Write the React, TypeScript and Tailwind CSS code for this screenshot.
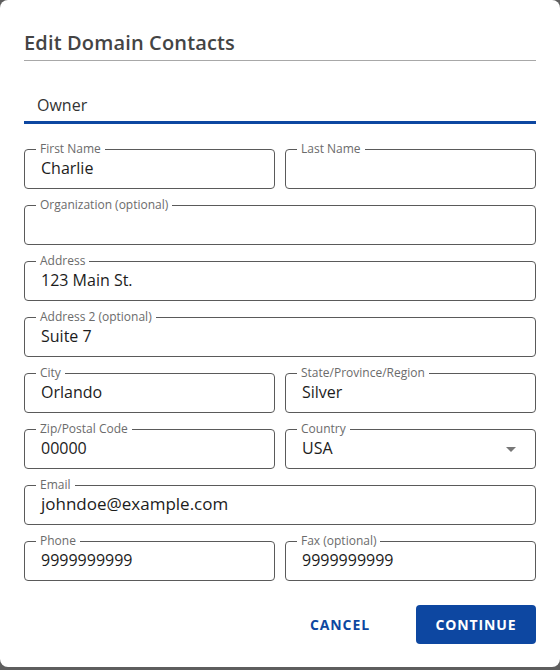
import React from "react";

type Field = {
  label: string;
  value?: string;
  span?: boolean;
  select?: boolean;
  large?: boolean;
};

const fields: Field[] = [
  { label: "First Name", value: "Charlie" },
  { label: "Last Name" },
  { label: "Organization (optional)", span: true },
  { label: "Address", value: "123 Main St.", span: true },
  { label: "Address 2 (optional)", value: "Suite 7", span: true },
  { label: "City", value: "Orlando" },
  { label: "State/Province/Region", value: "Silver" },
  { label: "Zip/Postal Code", value: "00000" },
  { label: "Country", value: "USA", select: true },
  { label: "Email", value: "johndoe@example.com", span: true, large: true },
  { label: "Phone", value: "9999999999" },
  { label: "Fax (optional)", value: "9999999999" },
];

function OutlinedField({ label, value, span, select, large }: Field) {
  return (
    <div
      className={`relative h-[40px] rounded-[4px] border border-[#5a5a5a] pl-[16px] pr-[16px] flex items-center ${
        span ? "col-span-2" : ""
      }`}
    >
      <span className="absolute left-[11px] top-[-9px] bg-white px-[4px] text-[12px] leading-[16px] text-[#6b6b6b]">
        {label}
      </span>
      <span
        className={`flex-1 mt-[-3px] text-[#1c1c1c] ${
          large ? "text-[17px]" : "text-[16px]"
        }`}
      >
        {value}
      </span>
      {select && (
        <svg width="10" height="5" viewBox="0 0 10 5" className="mr-[3px]">
          <path d="M0 0h10L5 5z" fill="#777" />
        </svg>
      )}
    </div>
  );
}

export default function App() {
  return (
    <div className="w-[560px] h-[670px] bg-[#5e5e5e]">
      <div
        className="h-[667px] bg-white rounded-[8px] px-[24px] pt-[29px]"
        style={{ fontFamily: '"Open Sans", "Noto Sans", sans-serif' }}
      >
        {/* Header */}
        <h2 className="h-[28px] text-[20px] leading-[28px] font-semibold tracking-[0.15px] text-[#444]">
          Edit Domain Contacts
        </h2>
        <div className="mt-[3px] h-px bg-[#a8a8a8]" />

        {/* Tab */}
        <div className="mt-[28px] border-b-[3px] border-[#0d47a1]">
          <div className="pl-[13px] text-[16px] leading-[32px] text-[#333]">
            Owner
          </div>
        </div>

        {/* Form */}
        <div className="mt-[25px] grid grid-cols-2 gap-x-[10px] gap-y-[16px]">
          {fields.map((f) => (
            <OutlinedField key={f.label} {...f} />
          ))}
        </div>

        {/* Actions */}
        <div className="mt-[23px] flex justify-end items-center">
          <button className="mr-[30px] px-[16px] h-[40px] text-[14px] font-bold tracking-[0.9px] text-[#0d47a1]">
            CANCEL
          </button>
          <button className="w-[120px] h-[39px] rounded-[4px] bg-[#0d47a1] text-[14px] font-bold tracking-[0.9px] text-white">
            CONTINUE
          </button>
        </div>
      </div>
    </div>
  );
}
